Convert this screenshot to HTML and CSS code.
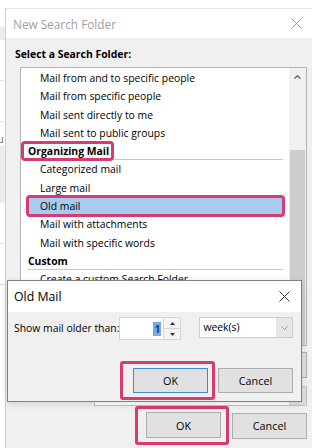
FILE: index.html
```html
<!DOCTYPE html>
<html lang="en">
<head>
    <meta charset="UTF-8">
    <meta name="viewport" content="width=device-width, initial-scale=1.0">
    <title>New Search Folder</title>
    <link rel="stylesheet" href="styles.css">
</head>
<body>
    <div class="desk">
        <div class="behind">
            <div class="band band-top"></div>
            <div class="line"></div>
            <div class="line"></div>
            <div class="peek">u</div>
            <div class="band band-mid"></div>
            <div class="line"></div>
            <div class="line"></div>
        </div>

        <div class="dialog">
            <div class="titlebar">
                <span class="title">New Search Folder</span>
                <svg class="close" width="11" height="11" viewBox="0 0 11 11">
                    <path d="M0.5 0.5 L10.5 10.5 M10.5 0.5 L0.5 10.5" stroke="#9a9a9a" stroke-width="1" fill="none"/>
                </svg>
            </div>

            <div class="dialog-body">
                <div class="label-bold">Select a Search Folder:</div>

                <div class="listbox">
                    <div class="items">
                        <div class="item">Mail from and to specific people</div>
                        <div class="item">Mail from specific people</div>
                        <div class="item">Mail sent directly to me</div>
                        <div class="item">Mail sent to public groups</div>
                        <div class="group"><span class="mark">Organizing Mail</span></div>
                        <div class="item">Categorized mail</div>
                        <div class="item">Large mail</div>
                        <div class="item selected">Old mail</div>
                        <div class="item">Mail with attachments</div>
                        <div class="item">Mail with specific words</div>
                        <div class="group">Custom</div>
                        <div class="item">Create a custom Search Folder</div>
                    </div>
                    <div class="scrollbar">
                        <div class="scroll-btn">
                            <svg width="7" height="4" viewBox="0 0 7 4">
                                <path d="M0.5 3.5 L3.5 0.8 L6.5 3.5" stroke="#606060" stroke-width="1.3" fill="none"/>
                            </svg>
                        </div>
                        <div class="thumb"></div>
                    </div>
                </div>

                <div class="custom-row">
                    <button class="btn">Choose...</button>
                </div>
                <div class="search-row">
                    <span class="search-label">Search mail in:</span>
                    <div class="combo"><span class="combo-text">Inbox</span><span class="combo-arrow"></span></div>
                </div>

                <div class="actions">
                    <div class="mark-box mark-main"><button class="btn">OK</button></div>
                    <button class="btn">Cancel</button>
                </div>
            </div>
        </div>
    </div>

    <div class="popup">
        <div class="popup-titlebar">
            <span class="popup-title">Old Mail</span>
            <svg class="close" width="11" height="11" viewBox="0 0 11 11">
                <path d="M0.5 0.5 L10.5 10.5 M10.5 0.5 L0.5 10.5" stroke="#333" stroke-width="1" fill="none"/>
            </svg>
        </div>
        <div class="popup-body">
            <div class="field-row">
                <span class="field-label">Show mail older than:</span>
                <div class="spin">
                    <div class="spin-input"><span class="sel">1</span></div>
                    <div class="spin-btns">
                        <div class="spin-btn">
                            <svg width="5" height="3" viewBox="0 0 5 3"><path d="M0 3 L2.5 0 L5 3 Z" fill="#333"/></svg>
                        </div>
                        <div class="spin-btn">
                            <svg width="5" height="3" viewBox="0 0 5 3"><path d="M0 0 L2.5 3 L5 0 Z" fill="#333"/></svg>
                        </div>
                    </div>
                </div>
                <div class="select">
                    <span class="select-text">week(s)</span>
                    <span class="select-arrow">
                        <svg width="7" height="4" viewBox="0 0 7 4">
                            <path d="M0.5 0.5 L3.5 3.5 L6.5 0.5" stroke="#999" stroke-width="1" fill="none"/>
                        </svg>
                    </span>
                </div>
            </div>
            <div class="popup-actions">
                <div class="mark-box mark-popup"><button class="btn btn-default">OK</button></div>
                <button class="btn">Cancel</button>
            </div>
        </div>
    </div>
</body>
</html>
```

FILE: styles.css
```css
body {
    margin: 0;
    width: 312px;
    height: 448px;
    overflow: hidden;
    position: relative;
    background-color: #ffffff;
    font-family: 'Open Sans', 'Noto Sans', sans-serif;
    font-size: 10.4px;
    color: #000000;
}
.desk {
    display: flex;
    align-items: flex-start;
    height: 448px;
}
.behind {
    width: 5px;
    flex-shrink: 0;
    display: flex;
    flex-direction: column;
}
.band {
    background-color: #ededed;
}
.band-top {
    margin-top: 27px;
    height: 13px;
}
.band-mid {
    height: 57px;
}
.line {
    margin-top: 40px;
    height: 1px;
    background-color: #e4e4e4;
}
.peek {
    margin-top: 9px;
    height: 15px;
    font-size: 11px;
    line-height: 15px;
    color: #777;
    text-indent: -3px;
    overflow: hidden;
}

.dialog {
    flex: 1;
    margin-top: 8px;
    height: 440px;
    background-color: #f0f0f0;
    border-left: 1px solid #cfcfcf;
    border-top: 1px solid #e2e2e2;
}
.titlebar {
    height: 29px;
    background-color: #ffffff;
    display: flex;
    align-items: center;
    justify-content: space-between;
    padding: 0 10px 0 7px;
}
.title {
    color: #a0a0a0;
    font-size: 11.8px;
}
.dialog-body {
    padding: 8px 5px 0 9px;
}
.label-bold {
    font-weight: bold;
    line-height: 16px;
    margin-bottom: 5px;
}
.listbox {
    margin-left: 5px;
    height: 277px;
    display: flex;
    background-color: #ffffff;
    border: 1px solid #b4b4b4;
}
.items {
    flex: 1;
    padding-top: 1px;
}
.item,
.group {
    height: 18.3px;
    line-height: 18.3px;
    margin: 0 6px 0 7px;
    white-space: nowrap;
}
.item {
    padding-left: 12px;
}
.group {
    font-weight: bold;
    box-shadow: inset 0 -1px 0 #c9c9c9;
    line-height: 16.3px;
    margin-top: 1px;
    height: 17.3px;
}
.mark {
    outline: 3px solid #d93a70;
    outline-offset: 0;
    border-radius: 1px;
    padding: 0 2px 0 4px;
    margin-left: -4px;
}
.selected {
    background-color: #a8ccef;
    outline: 3px solid #d93a70;
    outline-offset: -1px;
    border-radius: 2px;
}
.scrollbar {
    width: 17px;
    background-color: #f0f0f0;
    display: flex;
    flex-direction: column;
}
.scroll-btn {
    height: 17px;
    display: flex;
    align-items: center;
    justify-content: center;
}
.thumb {
    margin: 65px 1px 0 1px;
    flex: 1;
    background-color: #cdcdcd;
}
.custom-row {
    display: flex;
    justify-content: flex-end;
    margin-top: 6px;
}
.custom-row .btn {
    width: 75px;
    height: 26px;
}
.search-row {
    display: flex;
    align-items: center;
    margin-top: 8px;
    height: 19px;
}
.search-label {
    width: 79px;
}
.combo {
    flex: 1;
    display: flex;
    height: 18px;
    background-color: #ffffff;
    border: 1px solid #c3c3c3;
}
.combo-text {
    flex: 1;
    padding-left: 4px;
}
.combo-arrow {
    width: 17px;
    background-color: #e1e1e1;
}
.actions {
    display: flex;
    justify-content: flex-end;
    align-items: center;
    gap: 3px;
    margin-top: 1px;
}
.btn {
    width: 75px;
    height: 26px;
    font-family: inherit;
    font-size: 10.8px;
    color: #000;
    background-color: #e1e1e1;
    border: 1px solid #adadad;
    padding: 0;
}
.mark-box {
    border: 3px solid #d93a70;
    border-radius: 3px;
}
.mark-main {
    padding: 3px 5px 4px 8px;
}

.popup {
    position: absolute;
    left: 7px;
    top: 280px;
    width: 293px;
    height: 120px;
    border: 1px solid #808080;
    background-color: #f0f0f0;
    box-shadow: 0 2px 8px rgba(0, 0, 0, 0.12);
}
.popup-titlebar {
    height: 31px;
    background-color: #ffffff;
    display: flex;
    align-items: center;
    justify-content: space-between;
    padding: 0 11px 0 6px;
}
.popup-title {
    font-size: 12.3px;
}
.popup-body {
    padding: 5px 8px 0 6px;
}
.field-row {
    display: flex;
    align-items: flex-start;
}
.field-label {
    width: 106px;
    line-height: 23px;
    white-space: nowrap;
}
.spin {
    display: flex;
    height: 23px;
}
.spin-input {
    width: 41px;
    background-color: #ffffff;
    border: 1px solid #d4d4d4;
    border-right: none;
    display: flex;
    align-items: center;
    justify-content: flex-end;
    padding-right: 2px;
}
.sel {
    background-color: #76abe6;
    color: #1a3e78;
    line-height: 14px;
    padding: 0 1px;
    font-weight: bold;
}
.spin-btns {
    width: 16px;
    display: flex;
    flex-direction: column;
    border: 1px solid #d4d4d4;
    background-color: #f4f4f4;
}
.spin-btn {
    flex: 1;
    display: flex;
    align-items: center;
    justify-content: center;
}
.spin-btn + .spin-btn {
    border-top: 1px solid #d4d4d4;
}
.select {
    margin-left: 18px;
    width: 93px;
    height: 19px;
    display: flex;
    background-color: #ffffff;
    border: 1px solid #cccccc;
}
.select-text {
    flex: 1;
    padding-left: 3px;
    line-height: 19px;
}
.select-arrow {
    width: 16px;
    background-color: #e6e6e6;
    display: flex;
    align-items: center;
    justify-content: center;
}
.popup-actions {
    display: flex;
    justify-content: flex-end;
    align-items: center;
    gap: 3px;
    margin-top: 21px;
}
.mark-popup {
    padding: 4px 4px 4px 10px;
}
.popup-actions .btn {
    height: 25px;
}
.btn-default {
    border: 1px solid #3c8ad6;
}
```
